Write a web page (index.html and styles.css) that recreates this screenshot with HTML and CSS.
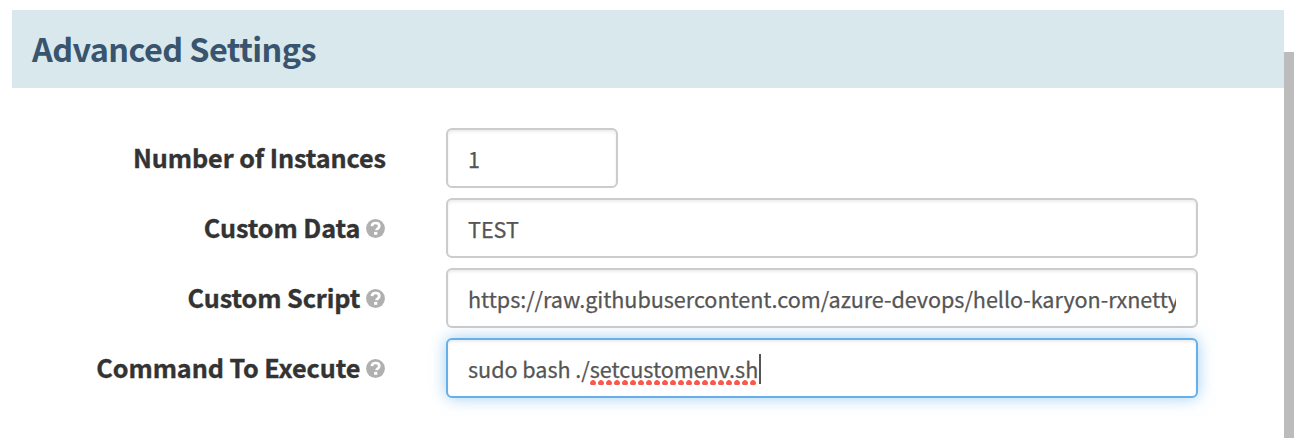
FILE: index.html
```html
<!DOCTYPE html>
<html lang="en">
<head>
<meta charset="utf-8">
<title>Advanced Settings</title>
<link rel="stylesheet" href="styles.css">
</head>
<body>
<svg class="defs" width="0" height="0" aria-hidden="true">
  <symbol id="help" viewBox="0 0 19 19">
    <circle cx="9.5" cy="9.5" r="9.4" fill="#b0b0b0"/>
    <path d="M5.9 7.2C6.1 4.9 7.5 4 9.6 4c2.1 0 3.7 1.1 3.7 3.1 0 2.4-2.8 2.4-2.8 4.1" fill="none" stroke="#fff" stroke-width="2.7"/>
    <rect x="8.1" y="12.9" width="3.2" height="2.9" fill="#fff"/>
  </symbol>
</svg>
<main class="page">
  <section class="panel">
    <h2 class="heading">Advanced Settings</h2>
    <form class="form">
      <div class="row">
        <div class="label"><span>Number of Instances</span></div>
        <div class="field short"><span class="value">1</span></div>
      </div>
      <div class="row">
        <div class="label"><span>Custom Data</span><svg class="help"><use href="#help"/></svg></div>
        <div class="field"><span class="value">TEST</span></div>
      </div>
      <div class="row">
        <div class="label"><span>Custom Script</span><svg class="help"><use href="#help"/></svg></div>
        <div class="field"><span class="value">https://raw.githubusercontent.com/azure-devops/hello-karyon-rxnetty</span></div>
      </div>
      <div class="row">
        <div class="label"><span>Command To Execute</span><svg class="help"><use href="#help"/></svg></div>
        <div class="field focused"><span class="value">sudo bash ./<span class="misspelled">setcustomenv.sh</span></span><span class="caret"></span></div>
      </div>
    </form>
  </section>
  <div class="edge"></div>
</main>
</body>
</html>
```
FILE: styles.css
```css
* { box-sizing: border-box; }
body {
  margin: 0;
  overflow: hidden;
  background: #fff;
  font-family: "Noto Sans CJK SC", "Noto Sans", sans-serif;
}
.defs { position: absolute; }
.page {
  display: flex;
  height: 438px;
  padding: 10px 0 0 12px;
}
.panel { width: 1272px; }
.edge {
  width: 10px;
  margin-top: 42px;
  background: #bcbcbc;
}
.heading {
  display: flex;
  align-items: center;
  height: 78px;
  margin: 0;
  padding: 0 20px 2px;
  background: #d9e8ec;
  color: #38546e;
  font-size: 32.4px;
  line-height: 40px;
  font-weight: 700;
  letter-spacing: -.58px;
}
.form {
  display: flex;
  flex-direction: column;
  gap: 10px;
  padding-top: 40px;
}
.row {
  display: flex;
  gap: 60px;
  height: 60px;
}
.label {
  display: flex;
  align-items: center;
  justify-content: flex-end;
  gap: 6px;
  width: 374px;
  color: #333;
  font-size: 25.2px;
  line-height: 36px;
  font-weight: 700;
  letter-spacing: -.08px;
  -webkit-text-stroke: .35px #333;
  white-space: nowrap;
}
.label span { padding-bottom: 2px; }
.help {
  width: 19px;
  height: 19px;
  margin-right: .7px;
  -webkit-text-stroke: 0;
}
.field {
  display: flex;
  align-items: center;
  width: 752px;
  padding: 2px 20px 0;
  border: 2px solid #ccc;
  border-radius: 6px;
  background: #fff;
  box-shadow: inset 0 2px 3px rgba(0, 0, 0, .075);
  color: #555;
  font-size: 21.6px;
  line-height: 32px;
  letter-spacing: -.04px;
  -webkit-text-stroke: .25px #555;
  white-space: nowrap;
}
.short { width: 172px; }
.value { overflow: hidden; }
.focused {
  border-color: #66afe9;
  box-shadow: inset 0 2px 3px rgba(0, 0, 0, .075), 0 0 16px rgba(102, 175, 233, .6);
}
.misspelled {
  padding-bottom: 2px;
  background: radial-gradient(circle at 3px 3px, #f9584c 2.5px, transparent 3.2px) 0 100% / 8px 6px repeat-x;
}
.caret {
  width: 2px;
  height: 30px;
  margin-left: .5px;
  background: #555;
}
```
